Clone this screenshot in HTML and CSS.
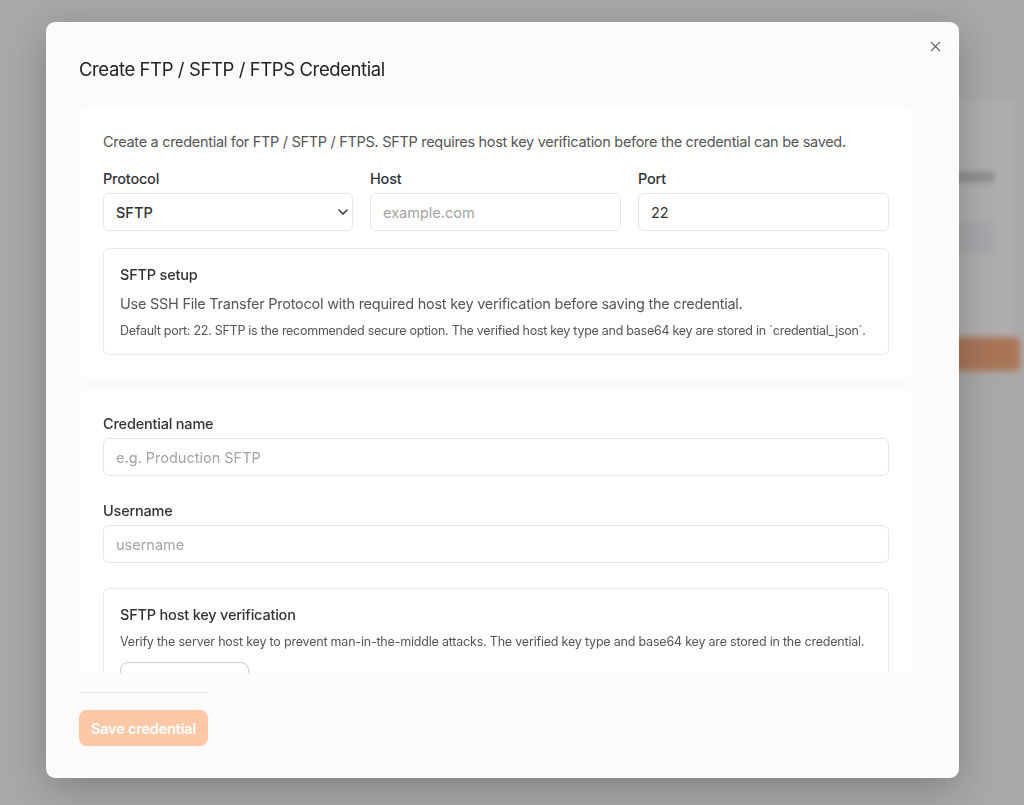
FILE: index.html
```html
<!DOCTYPE html>
<html lang="en">
<head>
    <meta charset="UTF-8">
    <meta name="viewport" content="width=device-width, initial-scale=1.0">
    <title>Create FTP / SFTP / FTPS Credential</title>
    <link rel="stylesheet" href="styles.css">
</head>
<body>

<!-- page behind the modal -->
<div class="page">
    <div class="page-main"></div>
    <div class="page-card">
        <div class="page-line"></div>
        <div class="page-field"></div>
        <div class="page-btn"></div>
    </div>
</div>

<div class="overlay">
    <div class="modal">
        <button class="close-btn" aria-label="Close">
            <svg width="11" height="11" viewBox="0 0 12 12" fill="none" stroke="#555" stroke-width="1.3" stroke-linecap="round">
                <path d="M1.5 1.5l9 9M10.5 1.5l-9 9"/>
            </svg>
        </button>
        <h2 class="modal-title">Create FTP / SFTP / FTPS Credential</h2>

        <div class="modal-body">
            <div class="section">
                <p class="intro">Create a credential for FTP / SFTP / FTPS. SFTP requires host key verification before the credential can be saved.</p>
                <div class="conn-grid">
                    <div class="field">
                        <label for="protocol">Protocol</label>
                        <select id="protocol" class="input select">
                            <option>SFTP</option>
                            <option>FTP</option>
                            <option>FTPS</option>
                        </select>
                    </div>
                    <div class="field">
                        <label for="host">Host</label>
                        <input id="host" class="input" type="text" placeholder="example.com">
                    </div>
                    <div class="field">
                        <label for="port">Port</label>
                        <input id="port" class="input" type="text" value="22">
                    </div>
                </div>
                <div class="info-box">
                    <div class="box-title">SFTP setup</div>
                    <p class="box-desc">Use SSH File Transfer Protocol with required host key verification before saving the credential.</p>
                    <p class="box-note">Default port: 22. SFTP is the recommended secure option. The verified host key type and base64 key are stored in `credential_json`.</p>
                </div>
            </div>

            <div class="section">
                <div class="field">
                    <label for="credName">Credential name</label>
                    <input id="credName" class="input" type="text" placeholder="e.g. Production SFTP">
                </div>
                <div class="field spaced">
                    <label for="username">Username</label>
                    <input id="username" class="input" type="text" placeholder="username">
                </div>
                <div class="info-box spaced">
                    <div class="box-title">SFTP host key verification</div>
                    <p class="box-note wide">Verify the server host key to prevent man-in-the-middle attacks. The verified key type and base64 key are stored in the credential.</p>
                    <button class="outline-btn" aria-label="Fetch host key"></button>
                </div>
            </div>
        </div>

        <div class="modal-footer">
            <button class="save-btn" disabled>Save credential</button>
        </div>
    </div>
</div>

</body>
</html>
```

FILE: styles.css
```css
body {
    margin: 0;
    font-family: Inter, "Liberation Sans", sans-serif;
    background-color: #f4f2ef;
    height: 805px;
    overflow: hidden;
}
.page {
    display: flex;
    gap: 20px;
    padding: 100px 10px 0 40px;
    filter: blur(3px);
}
.page-main {
    flex-grow: 1;
}
.page-card {
    width: 420px;
    height: 200px;
    background-color: #fbfaf8;
    padding: 72px 0 0 20px;
    display: flex;
    flex-direction: column;
    align-items: flex-end;
}
.page-line {
    width: 50px;
    height: 10px;
    background-color: #c8c8c8;
    margin-right: 20px;
}
.page-field {
    width: 60px;
    height: 32px;
    background-color: #eef0f4;
    margin: 40px 20px 0 0;
}
.page-btn {
    width: 70px;
    height: 34px;
    background-color: #f2a57a;
    border-radius: 6px;
    margin: 83px -6px 0 0;
}
.overlay {
    position: fixed;
    inset: 0;
    background-color: rgba(20, 20, 20, 0.33);
    padding: 22px 0 0 46px;
}
.modal {
    position: relative;
    width: 913px;
    height: 756px;
    box-sizing: border-box;
    background-color: #fcfbfa;
    border-radius: 9px;
    padding: 0 46px 0 33px;
    box-shadow: 0 10px 40px rgba(0, 0, 0, 0.25);
    display: flex;
    flex-direction: column;
    color: #2b2b2b;
}
.close-btn {
    position: absolute;
    top: 12px;
    right: 12px;
    width: 24px;
    height: 24px;
    border: none;
    background: none;
    padding: 0;
    display: flex;
    align-items: center;
    justify-content: center;
    cursor: pointer;
}
.modal-title {
    margin: 0;
    padding-top: 35px;
    font-size: 18.5px;
    font-weight: 400;
    line-height: 24px;
    letter-spacing: -0.4px;
    color: #222;
}
.modal-body {
    margin-top: 27px;
    height: 565px;
    overflow: hidden;
    display: flex;
    flex-direction: column;
    gap: 12px;
}
.section {
    background-color: #fff;
    border-radius: 8px;
    padding: 24px 24px 23px;
    flex-shrink: 0;
}
.intro {
    margin: 0 0 17px;
    font-size: 14.5px;
    line-height: 20px;
    color: #555;
    letter-spacing: -0.3px;
}
.conn-grid {
    display: grid;
    grid-template-columns: 1fr 1fr 1fr;
    gap: 17px;
}
.field {
    display: flex;
    flex-direction: column;
}
.field label {
    font-size: 14.5px;
    line-height: 20px;
    font-weight: 500;
    color: #333;
    margin-bottom: 4px;
    letter-spacing: -0.2px;
}
.input {
    height: 38px;
    box-sizing: border-box;
    border: 1px solid #e6e5e3;
    border-radius: 6px;
    padding: 0 12px;
    font-family: inherit;
    font-size: 14.5px;
    color: #333;
    background-color: #fff;
    outline: none;
}
.input::placeholder {
    color: #a3a3a3;
}
.select {
    appearance: none;
    -webkit-appearance: none;
    font-weight: 500;
    background-image: url("data:image/svg+xml,%3Csvg xmlns='http://www.w3.org/2000/svg' width='10' height='6' viewBox='0 0 10 6'%3E%3Cpath d='M1 1l4 4 4-4' fill='none' stroke='%23333' stroke-width='1.5' stroke-linecap='round' stroke-linejoin='round'/%3E%3C/svg%3E");
    background-repeat: no-repeat;
    background-position: right 4px center;
}
.info-box {
    border: 1px solid #ebe9e6;
    border-radius: 6px;
    padding: 16px 16px 14px;
    margin-top: 17px;
}
.spaced,
.info-box.spaced {
    margin-top: 25px;
}
.box-title {
    font-size: 14.5px;
    line-height: 20px;
    font-weight: 500;
    color: #333;
    letter-spacing: -0.2px;
}
.box-desc {
    margin: 9px 0 0;
    font-size: 14.5px;
    line-height: 20px;
    color: #555;
    letter-spacing: -0.25px;
}
.box-note {
    margin: 8px 0 0;
    font-size: 12.5px;
    line-height: 18px;
    color: #555;
    letter-spacing: -0.27px;
    white-space: nowrap;
}
.box-note.wide {
    letter-spacing: -0.2px;
}
.outline-btn {
    display: block;
    margin-top: 11px;
    width: 129px;
    height: 36px;
    border: 1px solid #cfcdca;
    border-radius: 8px;
    background-color: #fff;
}
.modal-footer {
    margin-top: 19px;
    border-top: 1px solid #e8e6e3;
    align-self: flex-start;
    padding-top: 17px;
}
.save-btn {
    width: 129px;
    height: 36px;
    border: none;
    border-radius: 8px;
    background-color: #fdc8a6;
    color: #fff;
    font-family: inherit;
    font-size: 14.5px;
    font-weight: 600;
    letter-spacing: -0.2px;
}
```
